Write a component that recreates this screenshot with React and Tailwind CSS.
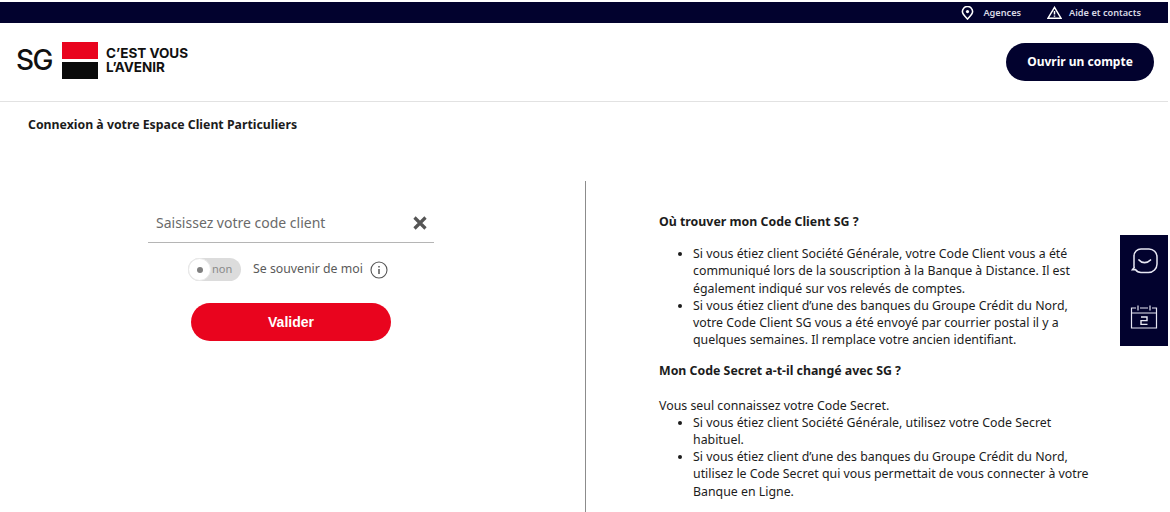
import React from "react";

function Pin() {
  return (
    <svg width="13" height="14" viewBox="0 0 14 15" fill="none" stroke="white" strokeWidth="1.7">
      <path d="M7 14C4 11 1.5 8.8 1.5 6a5.5 5.5 0 0 1 11 0C12.5 8.8 10 11 7 14Z" />
      <circle cx="7" cy="6" r="1.7" fill="white" stroke="none" />
    </svg>
  );
}

function Warn() {
  return (
    <svg width="15" height="13" viewBox="0 0 15 13" fill="none" stroke="white" strokeWidth="1.5">
      <path d="M7.5 1.4 14 12.2H1Z" />
      <path d="M7.5 5v3.6M7.5 9.4v1.4" />
    </svg>
  );
}

function Chat() {
  return (
    <svg width="27" height="26" viewBox="0 0 27 26" fill="none" stroke="#e8e8f4" strokeWidth="1.5">
      <path d="M10 1h8a8 8 0 0 1 8 8v7a8.5 8.5 0 0 1-8.5 8.5H10a7 7 0 0 1-5.6-3l-3 .2 1.8-2.2A8 8 0 0 1 3 17V8a7 7 0 0 1 7-7Z" />
      <path d="M8 12c3 3.6 8 3.6 11.5 0" strokeLinecap="round" strokeWidth="1.7" />
    </svg>
  );
}

function Cal() {
  return (
    <svg width="28" height="24" viewBox="0 0 28 24" fill="none" stroke="#e8e8f4" strokeWidth="1.2">
      <path d="M6 3H1.5v20h25V3H22M10 3h8M1.5 8h25M8 0.5v5M20 0.5v5" />
      <path d="M11 12h6v3.6h-6v3.8h6.5" strokeWidth="1.4" />
    </svg>
  );
}

function Info() {
  return (
    <svg width="18" height="18" viewBox="0 0 18 18" fill="none" stroke="#555" strokeWidth="1.1">
      <circle cx="9" cy="9" r="8" />
      <path d="M9 8v5M9 5v1.4" strokeWidth="1.5" />
    </svg>
  );
}

function Cross() {
  return (
    <svg width="14" height="14" viewBox="0 0 14 14" stroke="#555" strokeWidth="3.2">
      <path d="M1.5 1.5l11 11M12.5 1.5l-11 11" />
    </svg>
  );
}

export default function App() {
  return (
    <div className="relative h-[512px] w-[1170px] overflow-hidden bg-white font-['Noto_Sans',sans-serif] text-[#1c1c1c]">
      <div className="w-[1168px]">
        <div className="mt-[2px] flex h-[21px] items-center justify-end bg-[#02022e] pr-[27px] text-[9.2px] font-semibold text-[#d8d8e4]">
          <div className="flex items-center gap-[9px]"><Pin /><span>Agences</span></div>
          <div className="ml-[26px] flex items-center gap-[7px]"><Warn /><span>Aide et contacts</span></div>
        </div>
        <header className="flex h-[79px] items-center justify-between border-b border-[#e2e2e2] pl-[16px] pr-[14px]">
          <div className="mb-[4px] flex items-center">
            <span className="w-[38px] font-['Inter',sans-serif] text-[28px] font-medium leading-none tracking-[-1.5px] text-[#111]">SG</span>
            <div className="ml-[8px] flex w-[36px] flex-col gap-[3px]">
              <div className="h-[17px] bg-[#e9041e]" />
              <div className="h-[17px] bg-[#0a0a0a]" />
            </div>
            <div className="ml-[8px] font-['Inter',sans-serif] text-[13.5px] font-bold leading-[14px] text-[#111]">
              <div>C’EST VOUS</div>
              <div>L’AVENIR</div>
            </div>
          </div>
          <button className="flex h-[38px] w-[148px] items-center justify-center rounded-full bg-[#02022e] text-[12px] font-bold text-white">
            Ouvrir un compte
          </button>
        </header>
        <h1 className="ml-[28px] mt-[14px] text-[12.3px] font-bold leading-[18px]">Connexion à votre Espace Client Particuliers</h1>

        <main className="mt-[47px] flex">
          <section className="w-[585px] pl-[148px]">
            <div className="flex h-[62px] w-[286px] items-center justify-between border-b border-[#b5b5b5] pl-[8px] pr-[7px] pt-[25px] pb-[3px]">
              <span className="text-[14px] text-[#6a6a6a]">Saisissez votre code client</span>
              <Cross />
            </div>
            <div className="ml-[40px] mt-[15px] flex items-center">
              <div className="flex h-[23px] w-[53px] items-center rounded-full bg-[#dcdcdc]">
                <div className="flex h-[23px] w-[23px] items-center justify-center rounded-full border border-[#e8e8e8] bg-white">
                  <div className="h-[6px] w-[6px] rounded-full bg-[#808080]" />
                </div>
                <span className="ml-[1px] text-[11px] text-[#8a8a8a]">non</span>
              </div>
              <span className="ml-[12px] text-[12.3px] text-[#5a5a5a]">Se souvenir de moi</span>
              <span className="ml-[7px] flex"><Info /></span>
            </div>
            <button className="ml-[43px] mt-[22px] flex h-[38px] w-[200px] items-center justify-center rounded-full bg-[#e9041e] font-['Liberation_Sans',sans-serif] text-[14px] font-bold text-white">
              Valider
            </button>
          </section>
          <section className="h-[332px] flex-1 border-l border-[#8c8c8c] pl-[73px] text-[12.35px] leading-[17.2px]">
            <h2 className="mt-[32px] font-bold">Où trouver mon Code Client SG ?</h2>
            <ul className="mt-[15px] w-[434px] list-disc pl-[34px]">
              <li>Si vous étiez client Société Générale, votre Code Client vous a été communiqué lors de la souscription à la Banque à Distance. Il est également indiqué sur vos relevés de comptes.</li>
              <li>Si vous étiez client d’une des banques du Groupe Crédit du Nord, votre Code Client SG vous a été envoyé par courrier postal il y a quelques semaines. Il remplace votre ancien identifiant.</li>
            </ul>
            <h2 className="mt-[14px] font-bold">Mon Code Secret a-t-il changé avec SG ?</h2>
            <p className="mt-[17px]">Vous seul connaissez votre Code Secret.</p>
            <ul className="w-[434px] list-disc pl-[34px]">
              <li>Si vous étiez client Société Générale, utilisez votre Code Secret habituel.</li>
              <li>Si vous étiez client d’une des banques du Groupe Crédit du Nord, utilisez le Code Secret qui vous permettait de vous connecter à votre Banque en Ligne.</li>
            </ul>
          </section>
        </main>
      </div>
      <aside className="absolute left-[1120px] top-[235px] flex h-[111px] w-[48px] flex-col items-center gap-[31px] bg-[#02022e] pt-[13px]">
        <Chat />
        <Cal />
      </aside>
    </div>
  );
}
